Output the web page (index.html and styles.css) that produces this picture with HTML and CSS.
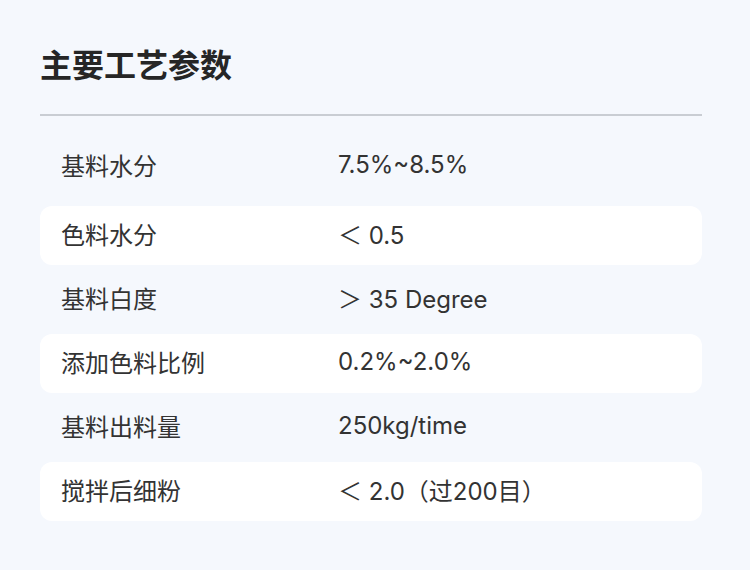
FILE: index.html
```html
<!DOCTYPE html>
<html lang="zh-CN">
<head>
<meta charset="utf-8">
<title>主要工艺参数</title>
<link rel="stylesheet" href="styles.css">
</head>
<body>
<main class="panel">
  <h1 class="title">主要工艺参数</h1>
  <div class="divider"></div>
  <div class="list">
    <div class="row first"><span class="label">基料水分</span><span class="value">7.5%~8.5%</span></div>
    <div class="row boxed"><span class="label">色料水分</span><span class="value">＜ 0.5</span></div>
    <div class="row"><span class="label">基料白度</span><span class="value">＞ 35 Degree</span></div>
    <div class="row boxed"><span class="label">添加色料比例</span><span class="value">0.2%~2.0%</span></div>
    <div class="row"><span class="label">基料出料量</span><span class="value">250kg/time</span></div>
    <div class="row boxed"><span class="label">搅拌后细粉</span><span class="value">＜ 2.0（过200目）</span></div>
  </div>
</main>
</body>
</html>
```
FILE: styles.css
```css
html, body {
  margin: 0;
  padding: 0;
  background: #f5f8fd;
}
body {
  font-family: Inter, "Noto Sans CJK SC", sans-serif;
  color: #333;
}
.panel {
  width: 662px;
  margin-left: 40px;
  padding-top: 41px;
}
.title {
  margin: 0;
  font-family: "Noto Sans CJK SC", sans-serif;
  font-size: 32px;
  line-height: 44px;
  font-weight: 700;
  color: #262626;
}
.divider {
  margin-top: 29px;
  height: 2px;
  background: #c9cdd3;
}
.list {
  margin-top: 21.5px;
  display: flex;
  flex-direction: column;
  gap: 5px;
}
.row {
  box-sizing: border-box;
  height: 59px;
  display: flex;
  align-items: center;
  padding-left: 21px;
  padding-bottom: 4px;
  border-radius: 12px;
  font-size: 24px;
}
.row.first {
  margin-bottom: 4.5px;
  padding-bottom: 6px;
}
.row.boxed {
  background: #fff;
}
.label {
  width: 277px;
  font-family: "Noto Sans CJK SC", sans-serif;
}
.value {
  font-family: Inter, "Noto Sans CJK SC", sans-serif;
}
```
